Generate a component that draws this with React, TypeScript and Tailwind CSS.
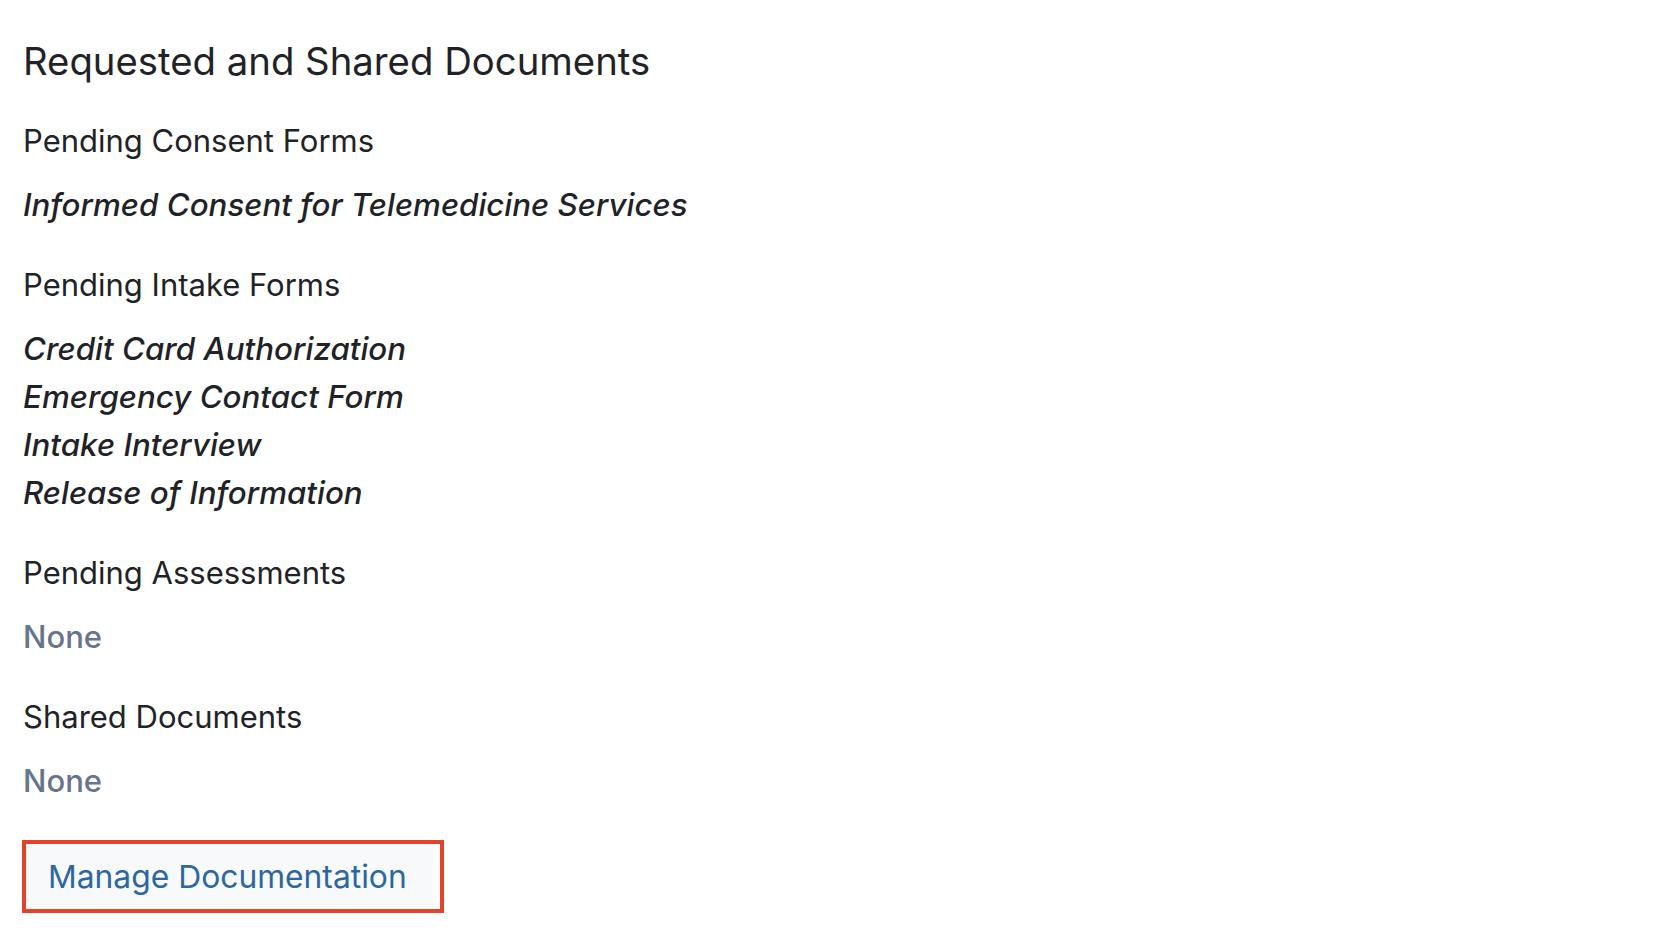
import React from "react";

const Header = ({ children, className = "" }: { children: React.ReactNode; className?: string }) => (
  <div className={`text-[31px] leading-[48px] text-[#1f2328] ${className}`}>{children}</div>
);

const Item = ({ children }: { children: React.ReactNode }) => (
  <div className="text-[31.3px] leading-[48px] italic font-medium text-[#1f2328]">{children}</div>
);

const None = () => (
  <div className="text-[31px] leading-[48px] font-medium text-[#66758c]">None</div>
);

export default function App() {
  return (
    <div
      className="min-h-[936px] w-[1656px] bg-white pl-[23px] pt-[36px]"
      style={{ fontFamily: "Inter, 'Noto Sans', sans-serif" }}
    >
      <h2 className="text-[38.3px] leading-[50px] text-[#1f2328]">Requested and Shared Documents</h2>

      <Header className="mt-[31px]">Pending Consent Forms</Header>
      <div className="mt-[16px]">
        <Item>Informed Consent for Telemedicine Services</Item>
      </div>

      <Header className="mt-[32px]">Pending Intake Forms</Header>
      <div className="mt-[16px]">
        <Item>Credit Card Authorization</Item>
        <Item>Emergency Contact Form</Item>
        <Item>Intake Interview</Item>
        <Item>Release of Information</Item>
      </div>

      <Header className="mt-[32px]">Pending Assessments</Header>
      <div className="mt-[16px]">
        <None />
      </div>

      <Header className="mt-[32px]">Shared Documents</Header>
      <div className="mt-[16px]">
        <None />
      </div>

      <div className="ml-[-1px] mt-[35px] flex h-[73px] w-[422px] border-[4px] border-[#e5422a]">
        <div className="mr-[7px] flex flex-1 items-center bg-[#f7f9fb] pl-[22px]">
          <span className="text-[31.8px] leading-[48px] text-[#2d67a0]">Manage Documentation</span>
        </div>
      </div>
    </div>
  );
}
